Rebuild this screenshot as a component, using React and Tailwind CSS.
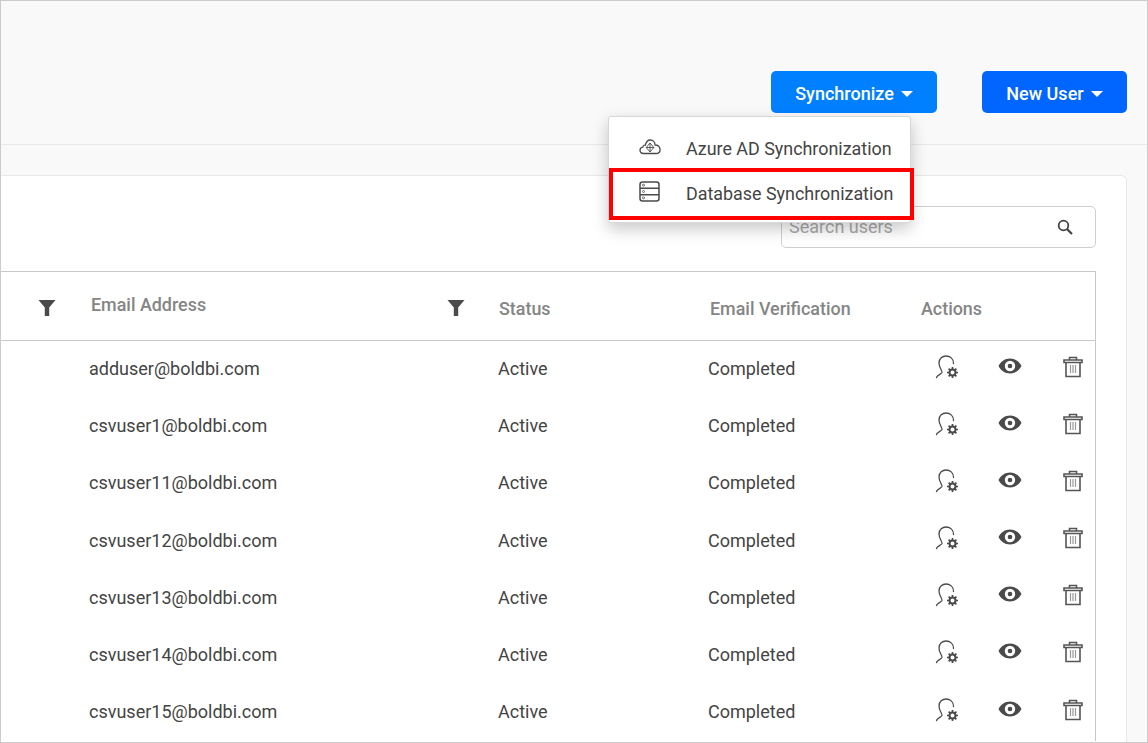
import React from "react";

const rows = ["adduser@boldbi.com","csvuser1@boldbi.com","csvuser11@boldbi.com","csvuser12@boldbi.com","csvuser13@boldbi.com","csvuser14@boldbi.com","csvuser15@boldbi.com"];

const Caret = () => (
  <svg width="12" height="6" viewBox="0 0 12 6" className="ml-[7px] mt-[1px]"><path d="M0 0h12L6 6z" fill="#fff" /></svg>
);
const Filter = () => (
  <svg width="18" height="18" viewBox="0 0 18 18"><path d="M0.5 1h17l-6.3 7.4V17H6.8V8.4z" fill="#4a4a4a" /></svg>
);
const UserGear = () => (
  <svg width="24" height="24" viewBox="0 0 24 24" fill="none">
    <path d="M1.500 22.500C2 20 6 19.500 7 17.500 7.500 15.500 4 13 4 8 4 3.500 7.500 1 11 1c4 0 7.500 2.500 7.500 7.500" stroke="#4a4a4a" strokeWidth="1.300" strokeLinecap="round" />
    <circle cx="17.500" cy="17.500" r="3" stroke="#4a4a4a" strokeWidth="2" />
    <path d="M17.500 12v2M17.500 21v2M12 17.500h2M21 17.500h2M13.600 13.600l1.400 1.400M20 20l1.400 1.400M13.600 21.400l1.400-1.400M20 15l1.400-1.400" stroke="#4a4a4a" strokeWidth="1.700" />
  </svg>
);
const Eye = () => (
  <svg width="24" height="16" viewBox="0 0 24 16">
    <path fillRule="evenodd" d="M0.500 8C3 3.200 7.200.500 12 .500S21 3.200 23.500 8C21 12.800 16.800 15.500 12 15.500S3 12.800.500 8zM12 2.800a5.200 5.200 0 1 0 0 10.400 5.200 5.200 0 0 0 0-10.400z" fill="#4a4a4a" />
    <circle cx="12" cy="8" r="2.300" fill="#4a4a4a" />
  </svg>
);
const Trash = () => (
  <svg width="20" height="22" viewBox="0 0 20 22" fill="none" stroke="#555" strokeWidth="1.600">
    <path d="M1 6.500V4h18v2.500zM6.500 4V1.500h7V4M3 6.500V20.500h14V6.500" />
    <path d="M7.500 9v8M10 9v8M12.500 9v8" strokeWidth="1.200" stroke="#999" />
  </svg>
);
const Cloud = () => (
  <svg width="22" height="18" viewBox="0 0 22 18" fill="none" stroke="#4a4a4a" strokeWidth="1.300">
    <path d="M5.500 15.500H4.200C2.200 15.500 1 14 1 12.300c0-1.700 1.200-3 2.800-3.200C4 7.800 5 7 6.300 7.200 7 4 9 2 11.300 2c2.800 0 4.700 2.200 4.800 5 2.800-.1 5 1.800 5 4.400 0 2.400-1.800 4.100-4.100 4.100H5.500z" />
    <path d="M11 5l3.800 4.500L11 14 7.200 9.500zM11 5v9M7.200 9.500h7.600" strokeWidth="0.900" />
  </svg>
);
const Db = () => (
  <svg width="21" height="21" viewBox="0 0 21 21" fill="none" stroke="#4a4a4a" strokeWidth="1.500">
    <rect x="1" y="1" width="19" height="19" rx="2.500" />
    <path d="M1 7.300h19M1 13.700h19" />
    <circle cx="4.500" cy="4.200" r="1" strokeWidth="0.800" />
    <circle cx="4.500" cy="10.500" r="1" strokeWidth="0.800" />
    <circle cx="4.500" cy="16.800" r="1" strokeWidth="0.800" />
  </svg>
);
const Search = () => (
  <svg width="16" height="16" viewBox="0 0 16 16" fill="none" stroke="#444" strokeWidth="1.800">
    <circle cx="6.500" cy="6.500" r="4.800" /><path d="M10 10l5 5" strokeWidth="2.200" />
  </svg>
);

export default function App() {
  return (
    <div className="relative flex h-[743px] w-[1148px] flex-col overflow-hidden border border-[#cccccc] bg-[#f9f9f9] font-['Roboto',sans-serif] text-[18px] text-[#444]">
      <header className="flex h-[144px] shrink-0 items-start justify-end gap-[45px] border-b border-[#e8e8e8] pt-[70px] pr-[20px]">
        <button className="flex h-[42px] w-[166px] items-center justify-center rounded-[5px] bg-[#0080ff] pt-[2px] font-medium text-white">Synchronize<Caret /></button>
        <button className="flex h-[42px] w-[145px] items-center justify-center rounded-[5px] bg-[#0066ff] pt-[2px] font-medium text-white">New User<Caret /></button>
      </header>

      <main className="mt-[30px] mr-[20px] flex-1 rounded-tr-[6px] border-t border-r border-[#e8e8e8] bg-white">
        <div className="mt-[30px] mr-[30px] flex justify-end">
          <div className="flex h-[42px] w-[315px] items-center justify-between rounded-[5px] border border-[#cfcfcf] pr-[22px] pl-[7px] text-[#aaa]">
            <span className="-mt-[1px]">Search users</span>
            <Search />
          </div>
        </div>
        <div className="mt-[23px] mr-[30px] border-t border-r border-[#c8c8c8]">
          <div className="grid h-[69px] grid-cols-[497px_210px_213px_1fr] items-center border-b border-[#c8c8c8] pt-[6px] text-[17.900px] font-medium text-[#858585]">
            <div className="-mt-[2px] flex items-center pl-[37px]">
              <Filter />
              <span className="-mt-[5px] ml-[35px] w-[356px]">Email Address</span>
              <Filter />
            </div>
            <span className="pl-[1px]">Status</span>
            <span className="pl-[2px]">Email Verification</span>
            <span>Actions</span>
          </div>
          {rows.map((e) => (
            <div key={e} className="grid h-[57.170px] grid-cols-[497px_210px_213px_1fr] items-center pb-[1.900px]">
              <span className="pl-[88px]">{e}</span>
              <span>Active</span>
              <span>Completed</span>
              <div className="flex items-center pl-[14px]">
                <span className="flex w-[63px] -translate-y-[2px]"><UserGear /></span>
                <span className="flex w-[65px] -translate-y-[3px]"><Eye /></span>
                <span className="-translate-y-[2px]"><Trash /></span>
              </div>
            </div>
          ))}
        </div>
      </main>

      <div className="absolute top-[115px] left-[607px] flex h-[107px] w-[303px] flex-col rounded-[3px] border border-[#d8d8d8] bg-white text-[17.900px] shadow-[0_6px_16px_rgba(0,0,0,0.22)]">
        <div className="flex h-[52px] items-center pt-[13px]">
          <span className="ml-[30px] flex w-[47px] -translate-y-[3px]"><Cloud /></span>
          <span>Azure AD Synchronization</span>
        </div>
        <div className="flex h-[45px] items-center pt-[5px]">
          <span className="ml-[30px] flex w-[47px] -translate-y-[3px]"><Db /></span>
          <span>Database Synchronization</span>
        </div>
      </div>
      <div className="absolute top-[167px] left-[608px] h-[52px] w-[305px] border-[4px] border-[#ff0000]" />
    </div>
  );
}
